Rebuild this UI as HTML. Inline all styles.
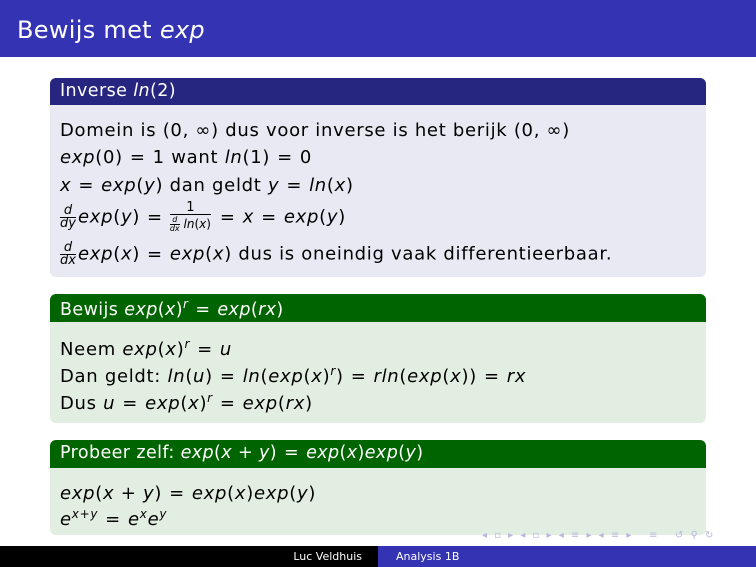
<!DOCTYPE html>
<html><head><meta charset="utf-8"><style>
*{margin:0;padding:0;box-sizing:border-box}
body{width:756px;height:567px;background:#fff;position:relative;overflow:hidden;font-family:"DejaVu Sans",sans-serif;color:#000}
.t{position:absolute;left:0;top:0;width:756px;height:57px;background:#3333b3;color:#fff;font-size:24px;padding:16px 0 0 17px;letter-spacing:0.3px}
.hd{position:absolute;left:50px;width:656px;color:#fff;font-size:17.5px;padding:3px 0 0 10px;border-radius:6px 6px 0 0;white-space:nowrap;letter-spacing:0.4px}
.bd{position:absolute;left:50px;width:656px;border-radius:0 0 6px 6px}
.l{position:absolute;left:60px;font-size:18px;white-space:nowrap;letter-spacing:0.7px}
i{font-style:italic}
.e{margin:0 7px}
.fr{display:inline-block;vertical-align:middle;text-align:center;font-size:13px;line-height:12px;margin:0 2px 0 0;letter-spacing:0}
.fr>span{display:block}
.fr .n{border-bottom:1px solid #000;padding:0 1px}
.fr .s{font-size:12px;padding-top:1px}
.sf{display:inline-block;vertical-align:middle;text-align:center;font-size:8px;line-height:8px}
.sf span{display:block}
.sf .n{border-bottom:1px solid #000}
sup{font-size:12px;vertical-align:7px}
.f1{position:absolute;left:0;top:546px;width:378px;height:21px;background:#000;color:#fff;font-size:11px;text-align:right;padding:4px 16px 0 0}
.f2{position:absolute;left:378px;top:546px;width:378px;height:21px;background:#3333b3;color:#fff;font-size:11px;padding:4px 0 0 18px}
.nav{position:absolute;top:530px;left:482px;font-size:10px;color:#b8b8dc;letter-spacing:2px}
</style></head><body>
<div class="t">Bewijs met <i>exp</i></div>

<div class="hd" style="top:78px;height:27px;background:#262680">Inverse <i>ln</i>(2)</div>
<div class="bd" style="top:105px;height:172px;background:#e9e9f3"></div>
<div class="l" style="top:120px">Domein is (0, ∞) dus voor inverse is het berijk (0, ∞)</div>
<div class="l" style="top:147px"><i>exp</i>(0)<span class="e">=</span>1 want <i>ln</i>(1)<span class="e">=</span>0</div>
<div class="l" style="top:175px"><i>x</i><span class="e">=</span><i>exp</i>(<i>y</i>) dan geldt <i>y</i><span class="e">=</span><i>ln</i>(<i>x</i>)</div>
<div class="l" style="top:202px"><span class="fr"><span class="n"><i>d</i></span><span><i>dy</i></span></span><i>exp</i>(<i>y</i>)<span class="e">=</span><span class="fr"><span class="n">1</span><span class="s"><span class="sf"><span class="n"><i>d</i></span><span><i>dx</i></span></span> <i>ln</i>(<i>x</i>)</span></span><span class="e">=</span><i>x</i><span class="e">=</span><i>exp</i>(<i>y</i>)</div>
<div class="l" style="top:242px"><span class="fr"><span class="n"><i>d</i></span><span><i>dx</i></span></span><i>exp</i>(<i>x</i>)<span class="e">=</span><i>exp</i>(<i>x</i>) dus is oneindig vaak differentieerbaar.</div>

<div class="hd" style="top:294px;height:28px;background:#006400">Bewijs <i>exp</i>(<i>x</i>)<sup><i>r</i></sup><span class="e">=</span><i>exp</i>(<i>rx</i>)</div>
<div class="bd" style="top:322px;height:101px;background:#e3eee3"></div>
<div class="l" style="top:337px">Neem <i>exp</i>(<i>x</i>)<sup><i>r</i></sup><span class="e">=</span><i>u</i></div>
<div class="l" style="top:364px">Dan geldt: <i>ln</i>(<i>u</i>)<span class="e">=</span><i>ln</i>(<i>exp</i>(<i>x</i>)<sup><i>r</i></sup>)<span class="e">=</span><i>rln</i>(<i>exp</i>(<i>x</i>))<span class="e">=</span><i>rx</i></div>
<div class="l" style="top:391px">Dus <i>u</i><span class="e">=</span><i>exp</i>(<i>x</i>)<sup><i>r</i></sup><span class="e">=</span><i>exp</i>(<i>rx</i>)</div>

<div class="hd" style="top:440px;height:28px;background:#006400">Probeer zelf: <i>exp</i>(<i>x</i> + <i>y</i>)<span class="e">=</span><i>exp</i>(<i>x</i>)<i>exp</i>(<i>y</i>)</div>
<div class="bd" style="top:468px;height:67px;background:#e3eee3"></div>
<div class="l" style="top:483px"><i>exp</i>(<i>x</i> + <i>y</i>)<span class="e">=</span><i>exp</i>(<i>x</i>)<i>exp</i>(<i>y</i>)</div>
<div class="l" style="top:507px"><i>e</i><sup><i>x</i>+<i>y</i></sup><span class="e">=</span><i>e</i><sup><i>x</i></sup><i>e</i><sup><i>y</i></sup></div>

<div class="nav">◂ ▫ ▸ ◂ ▫ ▸ ◂ ≡ ▸ ◂ ≡ ▸ &nbsp; ≡ &nbsp; ↺ ⚲ ↻</div>
<div class="f1">Luc Veldhuis</div>
<div class="f2">Analysis 1B</div>
</body></html>
